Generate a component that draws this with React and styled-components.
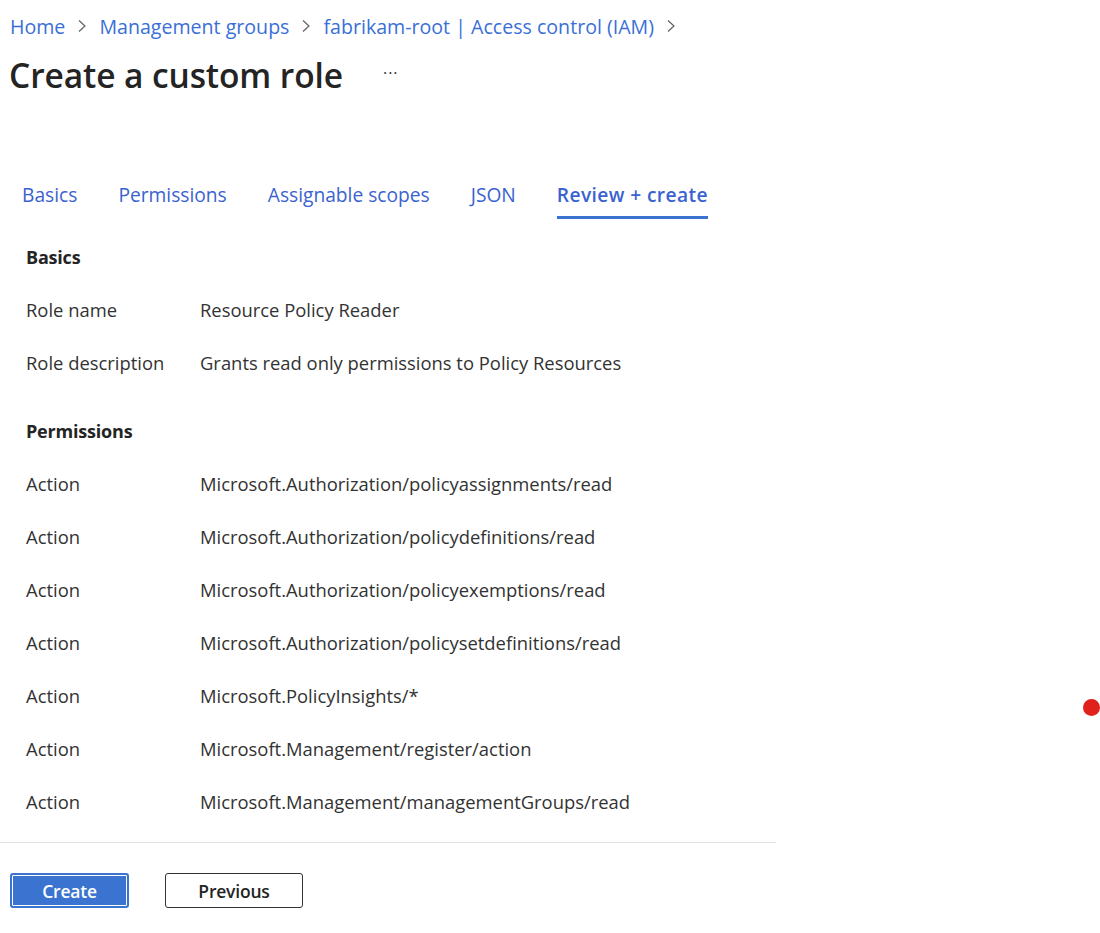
import React from 'react';
import styled, { createGlobalStyle } from 'styled-components';

const GlobalStyle = createGlobalStyle`
  html, body {
    margin: 0;
    padding: 0;
    background: #fff;
    font-family: "Open Sans", "Noto Sans", sans-serif;
    color: #242424;
  }
`;

const Page = styled.div`
  position: relative;
  width: 1100px;
  height: 933px;
  overflow: hidden;
`;

const Breadcrumb = styled.nav`
  display: flex;
  align-items: center;
  height: 26px;
  padding: 13px 0 0 10px;
  font-size: 19.6px;
`;

const Crumb = styled.a`
  color: #3a6fd8;
  text-decoration: none;
`;

const Chevron = styled.svg`
  width: 12px;
  height: 14px;
  margin: 0 11px;
`;

const TitleRow = styled.div`
  display: flex;
  align-items: center;
  padding: 0 0 0 9px;
  margin-top: 22px;
  height: 28px;
`;

const Title = styled.h1`
  margin: 0;
  font-size: 33.5px;
  font-weight: 600;
  letter-spacing: -0.1px;
  color: #242424;
  white-space: nowrap;
`;

const More = styled.span`
  margin-left: 40px;
  font-size: 16px;
  color: #333;
  letter-spacing: 1px;
  position: relative;
  top: -2px;
`;

const Tabs = styled.div`
  display: flex;
  gap: 41px;
  margin: 93px 0 0 22px;
  width: fit-content;
`;

const Tab = styled.div`
  font-size: 19.2px;
  color: #3a62d0;
  font-weight: ${p => (p.$active ? 600 : 400)};
  letter-spacing: ${p => (p.$active ? '0.4px' : '0')};
  padding-bottom: 8px;
  border-bottom: 3px solid ${p => (p.$active ? '#3a74d0' : 'transparent')};
  line-height: 26px;
  white-space: nowrap;
`;

const Content = styled.div`
  padding: 22px 0 0 26px;
`;

const SectionTitle = styled.div`
  font-size: 18px;
  font-weight: 700;
  height: 32px;
  line-height: 32px;
  letter-spacing: -0.2px;
  margin-top: ${p => p.$top || 0}px;
`;

const Row = styled.div`
  display: grid;
  grid-template-columns: 174px 1fr;
  height: 53px;
  align-items: center;
  font-size: 18.4px;
  color: #323232;
  white-space: nowrap;
  &:first-of-type { margin-top: 10px; }
`;

const Divider = styled.div`
  width: 776px;
  height: 1px;
  background: #e0e0e0;
  margin-top: 14px;
`;

const Footer = styled.div`
  display: flex;
  gap: 36px;
  padding: 30px 0 0 10px;
`;

const Button = styled.button`
  height: 35px;
  font-family: inherit;
  font-size: 17.5px;
  font-weight: 600;
  letter-spacing: -0.2px;
  border-radius: 3px;
  cursor: pointer;
  padding: 0;
  width: ${p => p.$w}px;
  ${p =>
    p.$primary
      ? `background: #3a74d0; color: #fff; border: 2px solid #3a74d0; box-shadow: inset 0 0 0 1px #fff;`
      : `background: #fff; color: #242424; border: 1px solid #333;`}
`;

const Dot = styled.div`
  position: absolute;
  left: 1083px;
  top: 699px;
  width: 17px;
  height: 17px;
  border-radius: 50%;
  background: #e0211c;
`;

const ChevronIcon = () => (
  <Chevron viewBox="0 0 12 14">
    <path d="M3 1.5 L9 7 L3 12.5" fill="none" stroke="#616161" strokeWidth="1.2" />
  </Chevron>
);

const crumbs = ['Home', 'Management groups', 'fabrikam-root | Access control (IAM)'];
const tabs = ['Basics', 'Permissions', 'Assignable scopes', 'JSON', 'Review + create'];
const actions = [
  'Microsoft.Authorization/policyassignments/read',
  'Microsoft.Authorization/policydefinitions/read',
  'Microsoft.Authorization/policyexemptions/read',
  'Microsoft.Authorization/policysetdefinitions/read',
  'Microsoft.PolicyInsights/*',
  'Microsoft.Management/register/action',
  'Microsoft.Management/managementGroups/read',
];

const App = () => (
  <Page>
    <GlobalStyle />
    <Breadcrumb>
      {crumbs.map(c => (
        <React.Fragment key={c}>
          <Crumb href="#">{c}</Crumb>
          <ChevronIcon />
        </React.Fragment>
      ))}
    </Breadcrumb>
    <TitleRow>
      <Title>Create a custom role</Title>
      <More>···</More>
    </TitleRow>
    <Tabs>
      {tabs.map(t => (
        <Tab key={t} $active={t === 'Review + create'}>{t}</Tab>
      ))}
    </Tabs>
    <Content>
      <SectionTitle>Basics</SectionTitle>
      <div>
        <Row>
          <span>Role name</span>
          <span>Resource Policy Reader</span>
        </Row>
        <Row>
          <span>Role description</span>
          <span>Grants read only permissions to Policy Resources</span>
        </Row>
      </div>
      <SectionTitle $top={26}>Permissions</SectionTitle>
      <div>
        {actions.map(a => (
          <Row key={a}>
            <span>Action</span>
            <span>{a}</span>
          </Row>
        ))}
      </div>
    </Content>
    <Divider />
    <Footer>
      <Button $primary $w={119}>Create</Button>
      <Button $w={138}>Previous</Button>
    </Footer>
    <Dot />
  </Page>
);

export default App;
